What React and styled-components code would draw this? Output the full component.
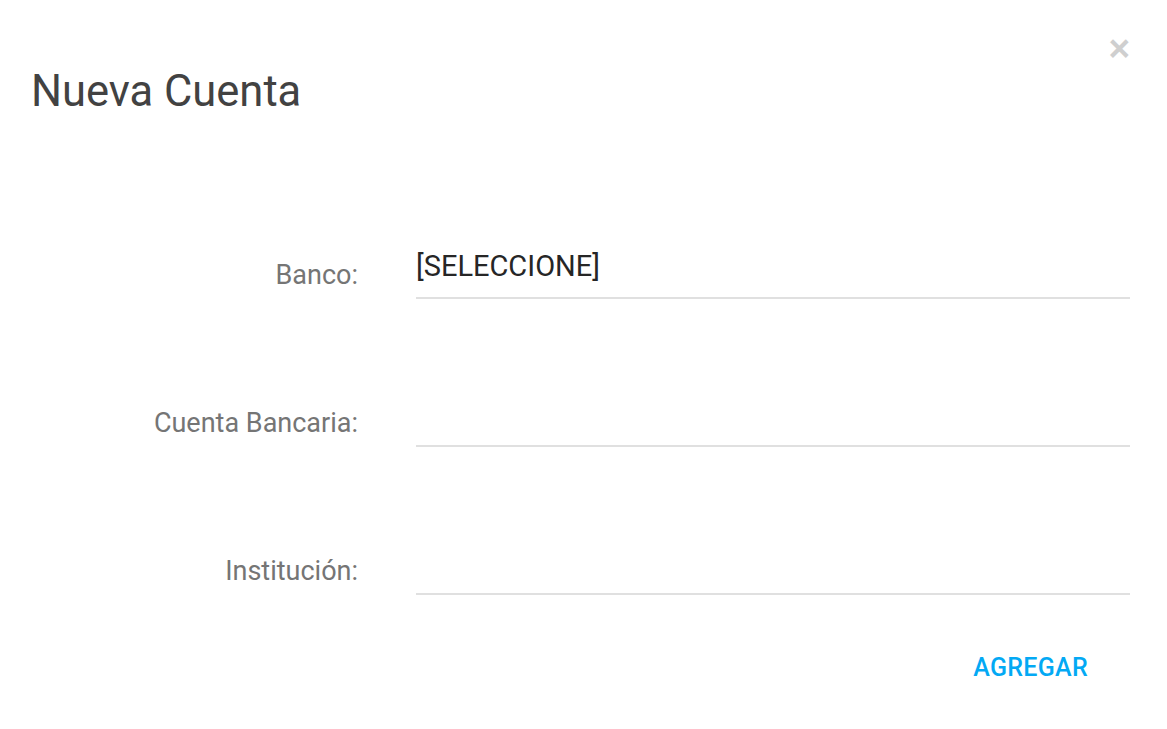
import styled, { createGlobalStyle } from "styled-components";

const GlobalStyle = createGlobalStyle`
  html, body {
    margin: 0;
    padding: 0;
    background: #fff;
  }
  body {
    font-family: Roboto, "Noto Sans", "Liberation Sans", sans-serif;
  }
`;

const Modal = styled.div`
  width: 1167px;
  height: 729px;
  box-sizing: border-box;
  background: #fff;
  display: flex;
  flex-direction: column;
`;

const Header = styled.div`
  display: flex;
  justify-content: space-between;
  align-items: flex-start;
  padding: 32px 37px 0 31px;
`;

const Title = styled.h2`
  margin: 34px 0 0 0;
  font-size: 43.5px;
  font-weight: 400;
  line-height: 1.2;
  color: #424242;
`;

const Close = styled.button`
  border: none;
  background: none;
  padding: 0;
  margin: 0;
  cursor: pointer;
  font-family: "Liberation Sans", Arial, sans-serif;
  font-size: 37px;
  font-weight: 700;
  line-height: 34px;
  color: #cfcfcf;
`;

const Form = styled.div`
  display: flex;
  flex-direction: column;
  padding: 33px 37px 0 32px;
`;

const Row = styled.div`
  display: grid;
  grid-template-columns: 326px 1fr;
  column-gap: 58px;
  align-items: end;
  height: 148px;
`;

const Label = styled.label`
  text-align: right;
  font-size: 27px;
  line-height: 32px;
  color: #757575;
  padding-bottom: 8px;
`;

const Field = styled.div`
  border-bottom: 2px solid #e0e0e0;
  height: 50px;
  box-sizing: border-box;
  display: flex;
  align-items: flex-start;
  font-size: 29px;
  line-height: 34px;
  color: #262626;
`;

const Footer = styled.div`
  display: flex;
  justify-content: flex-end;
  padding: 58px 79px 0 0;
`;

const Button = styled.button`
  border: none;
  background: none;
  padding: 0;
  cursor: pointer;
  font-family: Roboto, sans-serif;
  font-size: 25px;
  font-weight: 500;
  color: #03a9f4;
  letter-spacing: 0.3px;
`;

const fields = [
  { label: "Banco:", value: "[SELECCIONE]" },
  { label: "Cuenta Bancaria:", value: "" },
  { label: "Institución:", value: "" },
];

export default function App() {
  return (
    <>
      <GlobalStyle />
      <Modal>
        <Header>
          <Title>Nueva Cuenta</Title>
          <Close>×</Close>
        </Header>
        <Form>
          {fields.map((f) => (
            <Row key={f.label}>
              <Label>{f.label}</Label>
              <Field>{f.value}</Field>
            </Row>
          ))}
        </Form>
        <Footer>
          <Button>AGREGAR</Button>
        </Footer>
      </Modal>
    </>
  );
}
